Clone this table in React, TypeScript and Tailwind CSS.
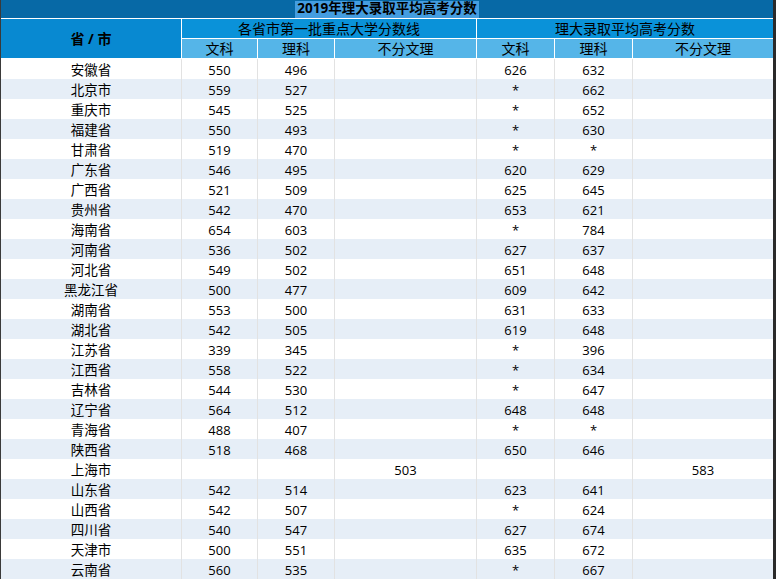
import React from "react";

type Row = [string, string, string, string, string, string, string];

const rows: Row[] = [
  ["安徽省", "550", "496", "", "626", "632", ""],
  ["北京市", "559", "527", "", "*", "662", ""],
  ["重庆市", "545", "525", "", "*", "652", ""],
  ["福建省", "550", "493", "", "*", "630", ""],
  ["甘肃省", "519", "470", "", "*", "*", ""],
  ["广东省", "546", "495", "", "620", "629", ""],
  ["广西省", "521", "509", "", "625", "645", ""],
  ["贵州省", "542", "470", "", "653", "621", ""],
  ["海南省", "654", "603", "", "*", "784", ""],
  ["河南省", "536", "502", "", "627", "637", ""],
  ["河北省", "549", "502", "", "651", "648", ""],
  ["黑龙江省", "500", "477", "", "609", "642", ""],
  ["湖南省", "553", "500", "", "631", "633", ""],
  ["湖北省", "542", "505", "", "619", "648", ""],
  ["江苏省", "339", "345", "", "*", "396", ""],
  ["江西省", "558", "522", "", "*", "634", ""],
  ["吉林省", "544", "530", "", "*", "647", ""],
  ["辽宁省", "564", "512", "", "648", "648", ""],
  ["青海省", "488", "407", "", "*", "*", ""],
  ["陕西省", "518", "468", "", "650", "646", ""],
  ["上海市", "", "", "503", "", "", "583"],
  ["山东省", "542", "514", "", "623", "641", ""],
  ["山西省", "542", "507", "", "*", "624", ""],
  ["四川省", "540", "547", "", "627", "674", ""],
  ["天津市", "500", "551", "", "635", "672", ""],
  ["云南省", "560", "535", "", "*", "667", ""],
];

const cols = "grid-cols-[180px_76px_77px_142px_78px_78px_141px]";
const subHeads = ["文科", "理科", "不分文理", "文科", "理科", "不分文理"];

export default function App() {
  return (
    <div
      className="w-[776px] h-[579px] overflow-hidden bg-white border-l border-l-[#3a3a3a] border-r-[3px] border-r-[#2a2a2a] text-[13px] text-black leading-none"
      style={{ fontFamily: '"Open Sans", "Noto Sans CJK SC", sans-serif' }}
    >
      {/* title */}
      <div className="h-[18px] bg-[#0769a6] flex items-center justify-center">
        <span className="bg-[#449de0] font-bold text-[13.5px] h-[17px] flex items-center px-[2px]">2019年理大录取平均高考分数</span>
      </div>

      {/* header */}
      <div className={`grid ${cols} grid-rows-[19px_19px] mt-px gap-y-px text-[14px]`}>
        <div className="row-span-2 bg-[#0889d1] font-bold flex items-center justify-center">省 / 市</div>
        <div className="col-span-3 bg-[#0a92d9] border-l border-white flex items-center justify-center">
          各省市第一批重点大学分数线
        </div>
        <div className="col-span-3 bg-[#0a92d9] border-l border-white flex items-center justify-center">
          理大录取平均高考分数
        </div>
        {subHeads.map((h, i) => (
          <div key={i} className="bg-[#55b5e8] border-l border-white flex items-center justify-center">
            {h}
          </div>
        ))}
      </div>

      {/* body */}
      <div className="mt-px">
        {rows.map((r, i) => (
          <div key={i} className={`grid ${cols} h-[20px] ${i % 2 === 1 ? "bg-[#e6eef7]" : "bg-white"}`}>
            {r.map((c, j) => (
              <div
                key={j}
                className={`flex items-center justify-center pt-[3px] ${j > 0 ? "border-l border-[#e2e2e2]" : "text-[13.5px]"}`}
              >
                {c}
              </div>
            ))}
          </div>
        ))}
      </div>
    </div>
  );
}
